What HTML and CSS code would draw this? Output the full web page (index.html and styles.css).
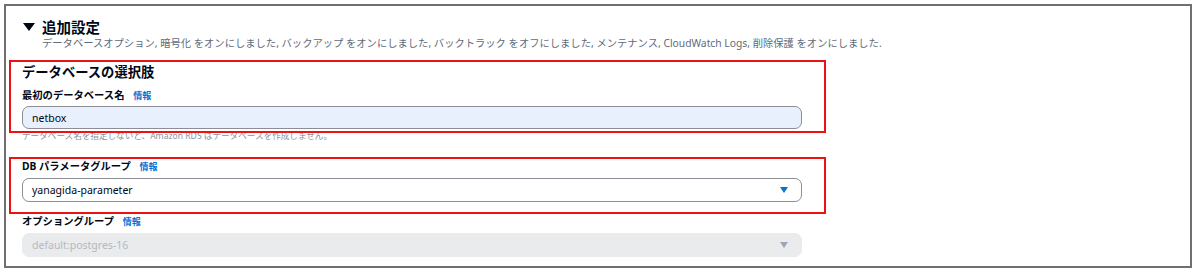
FILE: index.html
```html
<!DOCTYPE html>
<html lang="ja">
<head>
<meta charset="utf-8">
<title>追加設定</title>
<link rel="stylesheet" href="styles.css">
</head>
<body>
<div class="frame">
  <div class="card">
    <div class="header">
      <svg class="caret-title" width="12" height="8" viewBox="0 0 12 8"><polygon points="0,0 12,0 6,8" fill="#000716"/></svg>
      <h2 class="title">追加設定</h2>
    </div>
    <p class="desc">データベースオプション, 暗号化 をオンにしました, バックアップ をオンにしました, バックトラック をオフにしました, メンテナンス, CloudWatch Logs, 削除保護 をオンにしました.</p>

    <div class="fields">
      <h3 class="section">データベースの選択肢</h3>
      <div class="label">最初のデータベース名 <span class="info">情報</span></div>
      <div class="input autofill">netbox</div>
      <div class="hint">データベース名を指定しないと、Amazon RDS はテータベースを作成しません。</div>

      <div class="label gap-lg">DB パラメータグループ <span class="info">情報</span></div>
      <div class="input select">
        <span>yanagida-parameter</span>
        <svg width="8" height="6" viewBox="0 0 8 6"><polygon points="0,0 8,0 4,6" fill="#0972d3"/></svg>
      </div>

      <div class="label gap-md">オプショングループ <span class="info">情報</span></div>
      <div class="input select disabled">
        <span>default:postgres-16</span>
        <svg width="8" height="6" viewBox="0 0 8 6"><polygon points="0,0 8,0 4,6" fill="#9ba7b6"/></svg>
      </div>
    </div>
  </div>
  <div class="mark mark-1"></div>
  <div class="mark mark-2"></div>
</div>
</body>
</html>
```

FILE: styles.css
```css
html, body {
  margin: 0;
  padding: 0;
  background: #ffffff;
}
body {
  width: 1200px;
  height: 272px;
  overflow: hidden;
  font-family: "Noto Sans", "Noto Sans CJK JP", sans-serif;
  color: #000716;
}
.frame {
  position: relative;
  box-sizing: border-box;
  margin: 4px 0 0 4px;
  width: 1188px;
  height: 264px;
  border: 2px solid #707070;
  background: #fff;
}
.card {
  box-sizing: border-box;
  height: 100%;
  padding-top: 12px;
}
.header {
  display: flex;
  align-items: center;
  padding-left: 17px;
  height: 18px;
}
.caret-title {
  width: 12px;
  height: 8px;
  margin-right: 7px;
}
.title {
  margin: 0;
  font-size: 14.5px;
  line-height: 18px;
  font-weight: 700;
}
.desc {
  margin: 0;
  padding-left: 36px;
  font-size: 10.3px;
  line-height: 14px;
  color: #5f6b7a;
  white-space: nowrap;
}
.fields {
  padding-left: 16px;
  width: 780px;
}
.section {
  margin: 13px 0 0;
  font-size: 13.3px;
  line-height: 18px;
  font-weight: 700;
}
.label {
  margin-top: 6.5px;
  font-size: 10.3px;
  line-height: 14px;
  font-weight: 700;
}
.label.gap-lg { margin-top: 16.5px; }
.label.gap-md { margin-top: 12.5px; }
.info {
  margin-left: 6px;
  font-size: 9px;
  color: #0972d3;
  font-weight: 700;
}
.input {
  box-sizing: border-box;
  margin-top: 3.5px;
  height: 23px;
  border: 1.5px solid #8d8d96;
  border-radius: 7px;
  padding: 0 13px 0 9px;
  display: flex;
  align-items: center;
  justify-content: space-between;
  font-size: 10.5px;
  background: #fff;
}
.input.autofill {
  background: #e8f0fe;
}
.input.select {
  margin-top: 4px;
  height: 24px;
}
.input.disabled {
  height: 23.5px;
  border-color: #e9ebed;
  background: #e9ebed;
  color: #b4b9c2;
}
.hint {
  margin-top: 1px;
  font-size: 8.6px;
  line-height: 12px;
  color: #8a929c;
  white-space: nowrap;
}
.mark {
  position: absolute;
  box-sizing: border-box;
  border: 2px solid #ee1111;
}
.mark-1 {
  left: 3px;
  top: 54px;
  width: 817px;
  height: 73px;
}
.mark-2 {
  left: 3px;
  top: 151px;
  width: 817px;
  height: 57px;
}
```
